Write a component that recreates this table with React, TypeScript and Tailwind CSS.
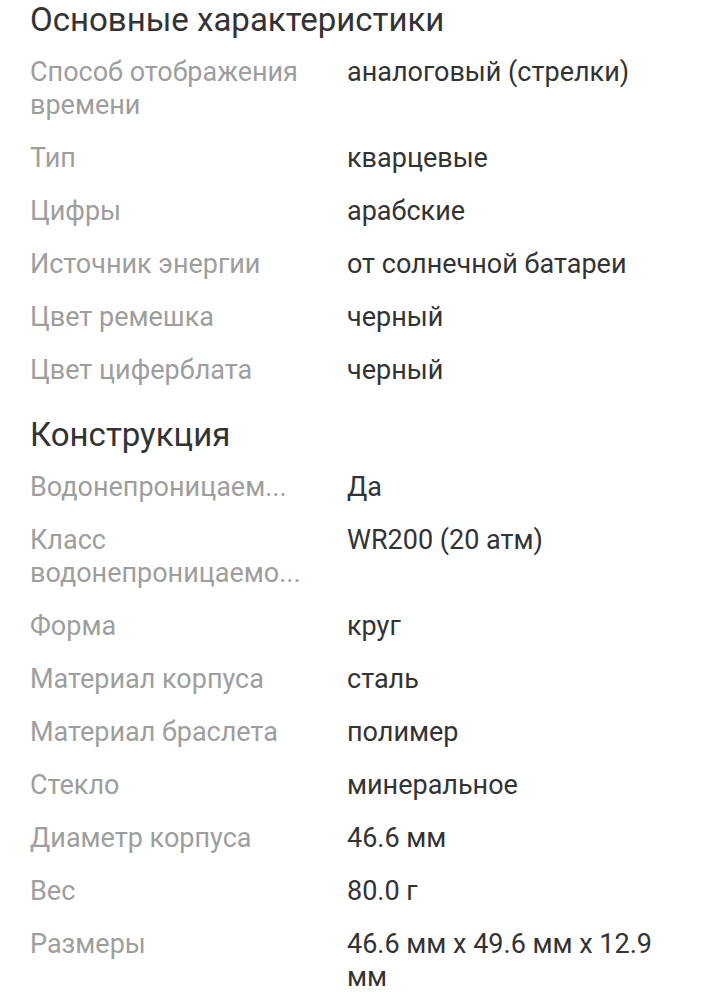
import React from 'react';

type Spec = { label: string; value: string };

const sections: { title: string; specs: Spec[] }[] = [
  {
    title: 'Основные характеристики',
    specs: [
      { label: 'Способ отображения времени', value: 'аналоговый (стрелки)' },
      { label: 'Тип', value: 'кварцевые' },
      { label: 'Цифры', value: 'арабские' },
      { label: 'Источник энергии', value: 'от солнечной батареи' },
      { label: 'Цвет ремешка', value: 'черный' },
      { label: 'Цвет циферблата', value: 'черный' },
    ],
  },
  {
    title: 'Конструкция',
    specs: [
      { label: 'Водонепроницаем...', value: 'Да' },
      { label: 'Класс водонепроницаемо...', value: 'WR200 (20 атм)' },
      { label: 'Форма', value: 'круг' },
      { label: 'Материал корпуса', value: 'сталь' },
      { label: 'Материал браслета', value: 'полимер' },
      { label: 'Стекло', value: 'минеральное' },
      { label: 'Диаметр корпуса', value: '46.6 мм' },
      { label: 'Вес', value: '80.0 г' },
      { label: 'Размеры', value: '46.6 мм x 49.6 мм x 12.9 мм' },
    ],
  },
];

function SpecRow({ label, value }: Spec) {
  return (
    <div className="flex py-[10px] text-[27px] leading-[33px]">
      <div className="w-[290px] mr-[27px] text-[#9e9e9e]">{label}</div>
      <div className="flex-1 text-[#333333]">{value}</div>
    </div>
  );
}

export default function App() {
  return (
    <div className="bg-white min-h-screen pl-[30px] pr-[40px] font-['Roboto',sans-serif]">
      {sections.map((s, i) => (
        <div key={s.title} className={i === 0 ? '' : 'mt-[18px]'}>
          <h2 className="text-[33px] leading-[40px] text-[#333333] mb-[6px]">{s.title}</h2>
          {s.specs.map((spec) => (
            <SpecRow key={spec.label} {...spec} />
          ))}
        </div>
      ))}
    </div>
  );
}
